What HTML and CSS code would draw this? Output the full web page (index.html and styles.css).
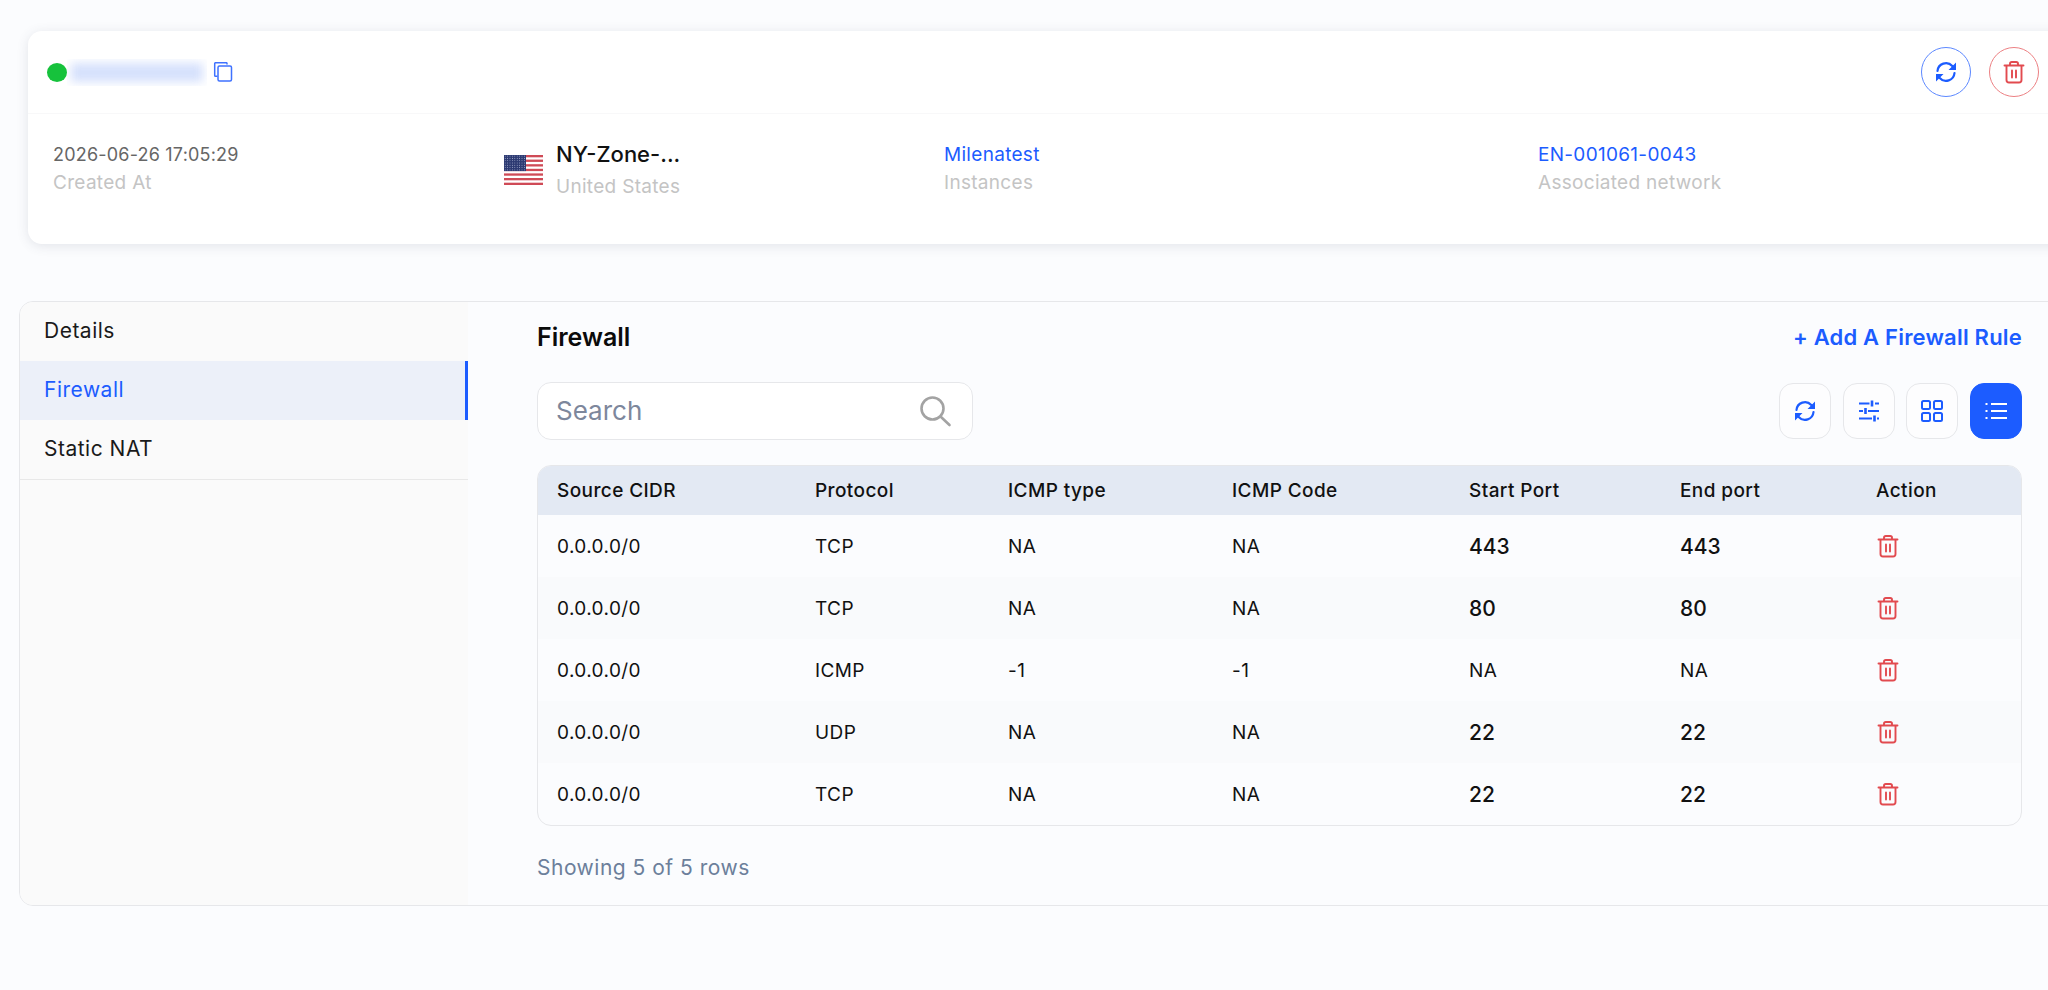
FILE: index.html
```html
<!DOCTYPE html>
<html lang="en">
  <head>
    <meta charset="UTF-8" />
    <meta name="viewport" content="width=device-width, initial-scale=1.0" />
    <title>Firewall</title>
    <link rel="stylesheet" href="styles.css">
  </head>
  <body>
    <svg class="sprites" width="0" height="0">
      <symbol id="i-refresh" viewBox="0 0 24 24">
        <path d="M3.500 11a8.500 8.500 0 0 1 14.800-5L20.500 8.500M20.500 13a8.500 8.500 0 0 1-14.800 5L3.500 15.500" fill="none" stroke="currentColor" stroke-width="2.200" stroke-linecap="round"/>
        <path d="M22 2.500v7.500h-7.500zM2 21.500V14h7.500z" fill="currentColor"/>
      </symbol>
      <symbol id="i-trash" viewBox="0 0 24 24">
        <path d="M2.500 5.500h19M8 5.500V3.800A1.800 1.800 0 0 1 9.800 2h4.400A1.800 1.800 0 0 1 16 3.800v1.700M4.500 5.500V20a2.500 2.500 0 0 0 2.500 2.500h10a2.500 2.500 0 0 0 2.500-2.500V5.500M10 10.500v7M14 10.500v7" fill="none" stroke="currentColor" stroke-width="1.900" stroke-linecap="round"/>
      </symbol>
      <pattern id="stars" width="2.400" height="2.300" patternUnits="userSpaceOnUse">
        <rect width="2.400" height="2.300" fill="#2c3a72"/>
        <circle cx="1.200" cy="1.100" r="0.450" fill="#aab2d0"/>
      </pattern>
    </svg>

    <div class="card">
      <div class="card-top">
        <span class="dot"></span>
        <span class="blurred"><span class="blurred-ink"></span></span>
        <svg class="copy" viewBox="0 0 20 20" fill="none" stroke="#3f72ff" stroke-width="1.500">
          <path d="M14 2.500V1.500a.8.8 0 0 0-.8-.8H2.500a.8.8 0 0 0-.8.8v12a.8.8 0 0 0 .8.8h2"/>
          <rect x="5" y="4" width="13.500" height="15" rx="1.500" fill="#fff"/>
        </svg>
        <div class="card-actions">
          <button class="circle circle-blue"><svg width="24" height="24"><use href="#i-refresh"/></svg></button>
          <button class="circle circle-red"><svg width="24" height="24"><use href="#i-trash"/></svg></button>
        </div>
      </div>
      <div class="card-info">
        <div class="info">
          <div class="info-date">2026-06-26 17:05:29</div>
          <div class="info-label">Created At</div>
        </div>
        <div class="info info-zone">
          <svg class="flag" viewBox="0 0 39 30">
            <rect width="39" height="30" fill="#fff"/>
            <g fill="#cf4a56">
              <rect width="39" height="2.300"/>
              <rect y="4.600" width="39" height="2.300"/>
              <rect y="9.200" width="39" height="2.300"/>
              <rect y="13.800" width="39" height="2.300"/>
              <rect y="18.400" width="39" height="2.300"/>
              <rect y="23" width="39" height="2.300"/>
              <rect y="27.700" width="39" height="2.300"/>
            </g>
            <rect width="22" height="16.100" fill="url(#stars)"/>
          </svg>
          <div>
            <div class="zone-name">NY-Zone-...</div>
            <div class="zone-country">United States</div>
          </div>
        </div>
        <div class="info">
          <div class="info-link">Milenatest</div>
          <div class="info-label">Instances</div>
        </div>
        <div class="info">
          <div class="info-link">EN-001061-0043</div>
          <div class="info-label">Associated network</div>
        </div>
      </div>
    </div>

    <div class="panel">
      <div class="side">
        <div class="side-item">Details</div>
        <div class="side-item side-active">Firewall</div>
        <div class="side-item side-last">Static NAT</div>
      </div>
      <div class="main">
        <div class="main-head">
          <h2>Firewall</h2>
          <a class="add-link">+ Add A Firewall Rule</a>
        </div>
        <div class="toolbar">
          <div class="search">
            <span>Search</span>
            <svg width="34" height="34" viewBox="0 0 34 34" fill="none" stroke="#a3a3a3" stroke-width="2.600" stroke-linecap="round">
              <circle cx="14.500" cy="14.500" r="11"/>
              <path d="M22.500 22.500l9 8.500"/>
            </svg>
          </div>
          <div class="tools">
            <button class="tool"><svg width="24" height="24"><use href="#i-refresh"/></svg></button>
            <button class="tool">
              <svg width="24" height="24" viewBox="0 0 24 24" fill="none" stroke="currentColor" stroke-width="1.800">
                <path d="M2 4.500h10.500M18 4.500h4M2 12h4M11 12h11M2 19.500h13M20 19.500h2"/>
                <path d="M15 1.500v6M8.500 9v6M17.500 16.500v6" stroke-width="2.600"/>
              </svg>
            </button>
            <button class="tool">
              <svg width="24" height="24" viewBox="0 0 24 24" fill="none" stroke="currentColor" stroke-width="2">
                <rect x="2" y="2" width="8" height="8" rx="1.500"/>
                <rect x="14" y="2" width="8" height="8" rx="1.500"/>
                <rect x="2" y="14" width="8" height="8" rx="1.500"/>
                <rect x="14" y="14" width="8" height="8" rx="1.500"/>
              </svg>
            </button>
            <button class="tool tool-on">
              <svg width="24" height="24" viewBox="0 0 24 24" fill="none" stroke="currentColor" stroke-width="2">
                <path d="M7 5h16M7 12h16M7 19h16"/>
                <path d="M1.500 5h2M1.500 12h2M1.500 19h2"/>
              </svg>
            </button>
          </div>
        </div>
        <div class="table-box">
          <table>
            <thead>
              <tr>
                <th class="c1">Source CIDR</th>
                <th class="c2">Protocol</th>
                <th class="c3">ICMP type</th>
                <th class="c4">ICMP Code</th>
                <th class="c5">Start Port</th>
                <th class="c6">End port</th>
                <th>Action</th>
              </tr>
            </thead>
            <tbody>
              <tr>
                <td>0.0.0.0/0</td><td>TCP</td><td>NA</td><td>NA</td>
                <td class="port">443</td><td class="port">443</td>
                <td><svg class="del" width="24" height="24"><use href="#i-trash"/></svg></td>
              </tr>
              <tr>
                <td>0.0.0.0/0</td><td>TCP</td><td>NA</td><td>NA</td>
                <td class="port">80</td><td class="port">80</td>
                <td><svg class="del" width="24" height="24"><use href="#i-trash"/></svg></td>
              </tr>
              <tr>
                <td>0.0.0.0/0</td><td>ICMP</td><td>-1</td><td>-1</td>
                <td>NA</td><td>NA</td>
                <td><svg class="del" width="24" height="24"><use href="#i-trash"/></svg></td>
              </tr>
              <tr>
                <td>0.0.0.0/0</td><td>UDP</td><td>NA</td><td>NA</td>
                <td class="port">22</td><td class="port">22</td>
                <td><svg class="del" width="24" height="24"><use href="#i-trash"/></svg></td>
              </tr>
              <tr>
                <td>0.0.0.0/0</td><td>TCP</td><td>NA</td><td>NA</td>
                <td class="port">22</td><td class="port">22</td>
                <td><svg class="del" width="24" height="24"><use href="#i-trash"/></svg></td>
              </tr>
            </tbody>
          </table>
        </div>
        <div class="rows-note">Showing 5 of 5 rows</div>
      </div>
    </div>
  </body>
</html>
```

FILE: styles.css
```css
html,
body {
  height: 100%;
}

body {
  margin: 0;
  overflow: hidden;
  background: #fbfcfe;
  font-family: Inter, "Open Sans", sans-serif;
  color: #111;
}

.sprites {
  display: block;
  height: 0;
}

button {
  font: inherit;
  padding: 0;
  cursor: pointer;
}

/* top card */
.card {
  width: 2060px;
  height: 213px;
  margin: 31px 0 0 28px;
  background: #fff;
  border-radius: 14px;
  box-shadow: 0 2px 12px rgba(60, 70, 90, 0.13);
}

.card-top {
  display: flex;
  align-items: center;
  height: 82px;
  padding: 0 49px 0 19px;
  border-bottom: 1px solid #f8f8f9;
}

.dot {
  width: 20px;
  height: 19px;
  border-radius: 50%;
  background: #16c23c;
}

.blurred {
  width: 140px;
  height: 27px;
  overflow: hidden;
}

.blurred-ink {
  display: block;
  height: 19px;
  margin: 4px 4px;
  background: #d6e1fc;
  filter: blur(5px);
}

.copy {
  width: 20px;
  height: 20px;
  margin-left: 6px;
}

.card-actions {
  display: flex;
  gap: 18px;
  margin-left: auto;
}

.circle {
  display: flex;
  align-items: center;
  justify-content: center;
  width: 50px;
  height: 50px;
  border-radius: 50%;
  background: #fff;
}

.circle-blue {
  color: #1c5cff;
  border: 1px solid #5c88ff;
}

.circle-red {
  color: #e24a4f;
  border: 1px solid #ec8083;
}

.card-info {
  display: grid;
  grid-template-columns: 451px 440px 594px 1fr;
  padding: 27px 0 0 25px;
}

.info-date {
  font-size: 18px;
  line-height: 28px;
  letter-spacing: 0.2px;
  color: #666;
}

.info-label,
.zone-country {
  font-size: 19px;
  line-height: 28px;
  letter-spacing: 0.3px;
  color: #c4c4c4;
}

.info-link {
  font-size: 19px;
  line-height: 28px;
  letter-spacing: 0.3px;
  color: #1c5cff;
}

.info-zone {
  display: flex;
  align-items: center;
  gap: 13px;
  margin-top: -3px;
}

.flag {
  width: 39px;
  height: 30px;
}

.zone-name {
  font-size: 22px;
  line-height: 32px;
  font-weight: 500;
  color: #111;
}

.zone-country {
  margin-top: 3px;
}

/* tabs + table */
.panel {
  display: flex;
  width: 2060px;
  height: 605px;
  margin: 57px 0 0 19px;
  border: 1px solid #e6e7ea;
  border-radius: 14px;
  box-sizing: border-box;
  overflow: hidden;
}

.side {
  flex: none;
  width: 448px;
  background: #fafafa;
}

.side-item {
  height: 59px;
  padding-left: 24px;
  font-size: 21px;
  line-height: 58px;
  letter-spacing: 0.5px;
  color: #1a1a1a;
}

.side-active {
  background: #ecf0f9;
  color: #1c5cff;
  border-right: 3px solid #1c5cff;
}

.side-last {
  height: 60px;
  border-bottom: 1px solid #e8e8e8;
  box-sizing: border-box;
}

.main {
  flex: 1;
  min-width: 0;
  padding: 0 56px 0 69px;
}

.main-head {
  display: flex;
  justify-content: space-between;
  align-items: center;
  height: 69px;
}

h2 {
  margin: 0;
  font-size: 25px;
  font-weight: 600;
  color: #0b0b0b;
}

.add-link {
  font-size: 22px;
  font-weight: 600;
  letter-spacing: 0.2px;
  color: #1c5cff;
}

.toolbar {
  display: flex;
  justify-content: space-between;
  align-items: center;
  height: 58px;
  margin-top: 11px;
}

.search {
  display: flex;
  justify-content: space-between;
  align-items: center;
  width: 436px;
  height: 58px;
  padding: 0 20px 0 18px;
  box-sizing: border-box;
  background: #fff;
  border: 1px solid #e6e7ea;
  border-radius: 14px;
  font-size: 26px;
  line-height: 30px;
  color: #7d879c;
}

.tools {
  display: flex;
  gap: 11.7px;
}

.tool {
  display: flex;
  align-items: center;
  justify-content: center;
  width: 52px;
  height: 56px;
  background: #fdfdfe;
  color: #1c5cff;
  border: 1px solid #e6e7ea;
  border-radius: 14px;
}

.tool-on {
  background: #1c5cff;
  border-color: #1c5cff;
  color: #fff;
}

.table-box {
  margin-top: 25px;
  border: 1px solid #e6e7ea;
  border-radius: 14px;
  overflow: hidden;
}

table {
  width: 100%;
  border-collapse: collapse;
  table-layout: fixed;
}

th {
  box-sizing: border-box;
  height: 49px;
  padding: 0 0 0 19px;
  background: #e3e9f3;
  font-size: 19px;
  font-weight: 500;
  letter-spacing: 0.4px;
  text-align: left;
  color: #111;
}

td {
  height: 62px;
  padding: 0 0 0 19px;
  font-size: 19px;
  letter-spacing: 0.4px;
  color: #111;
}

tbody tr:nth-child(even) {
  background: #f9fafc;
}

.c1 {
  width: 258px;
}

.c2 {
  width: 193px;
}

.c3 {
  width: 224px;
}

.c4 {
  width: 237px;
}

.c5 {
  width: 211px;
}

.c6 {
  width: 196px;
}

.port {
  font-size: 21px;
  font-weight: 500;
  letter-spacing: 0;
}

.del {
  display: block;
  color: #e24a4f;
}

.rows-note {
  margin-top: 28px;
  font-size: 21px;
  line-height: 28px;
  letter-spacing: 0.5px;
  color: #6c7f9b;
}
```
